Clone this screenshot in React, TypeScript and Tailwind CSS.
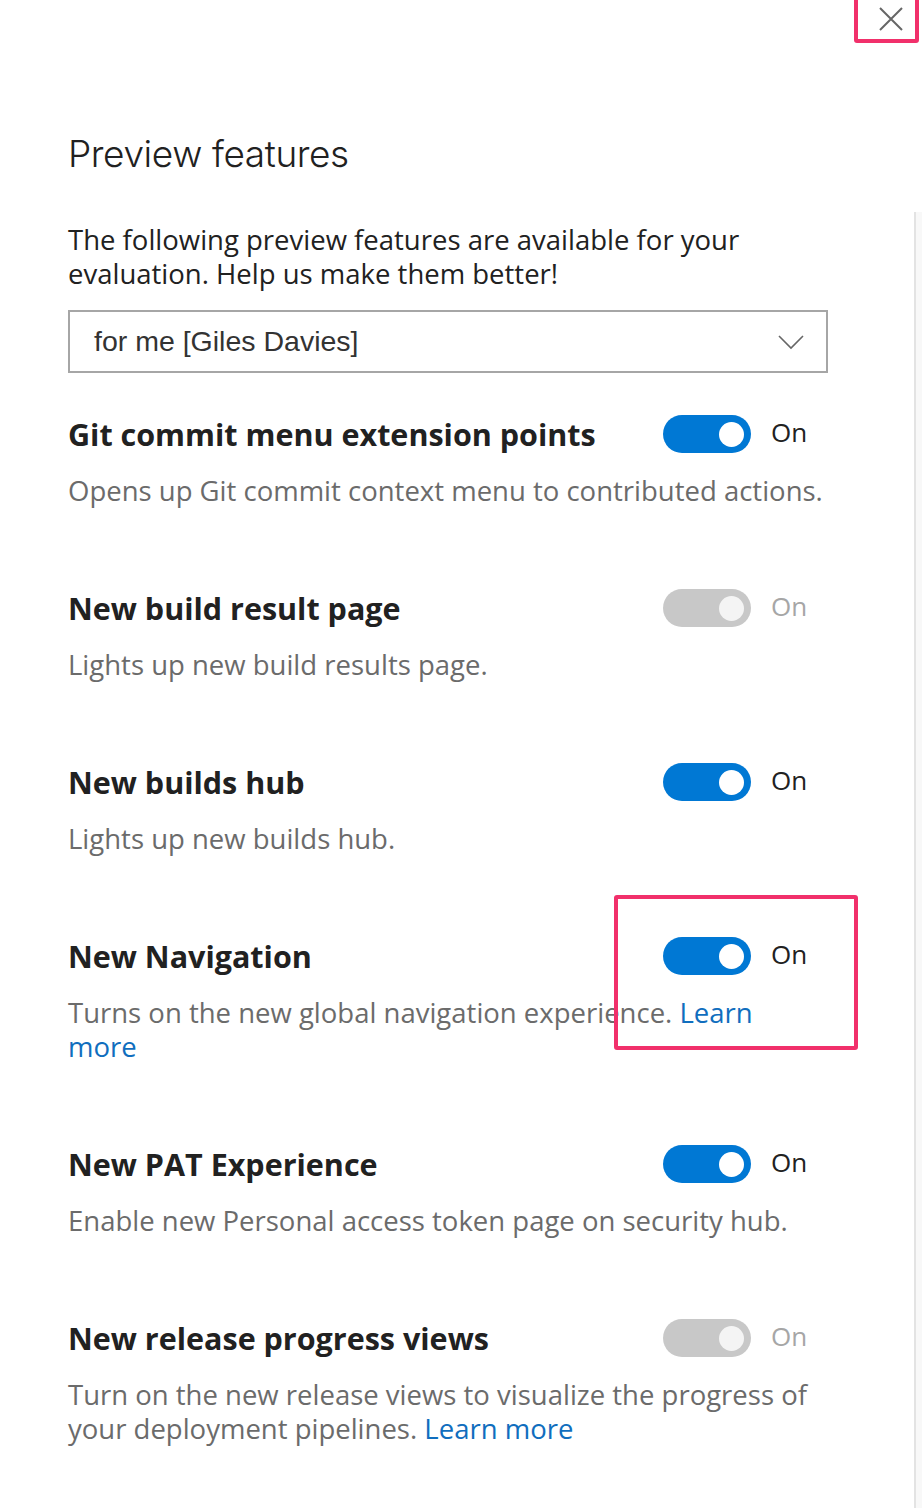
import React from "react";

type Feature = {
  title: string;
  desc: React.ReactNode;
  on: boolean;
};

const Link = ({ children }: { children: React.ReactNode }) => (
  <span className="text-[#106ebe]">{children}</span>
);

const features: Feature[] = [
  {
    title: "Git commit menu extension points",
    desc: "Opens up Git commit context menu to contributed actions.",
    on: true,
  },
  { title: "New build result page", desc: "Lights up new build results page.", on: false },
  { title: "New builds hub", desc: "Lights up new builds hub.", on: true },
  {
    title: "New Navigation",
    desc: (
      <>
        Turns on the new global navigation experience. <Link>Learn more</Link>
      </>
    ),
    on: true,
  },
  {
    title: "New PAT Experience",
    desc: "Enable new Personal access token page on security hub.",
    on: true,
  },
  {
    title: "New release progress views",
    desc: (
      <>
        Turn on the new release views to visualize the progress of your deployment pipelines.{" "}
        <Link>Learn more</Link>
      </>
    ),
    on: false,
  },
];

function Toggle({ on }: { on: boolean }) {
  return (
    <div className="flex items-center">
      <div
        className={
          on
            ? "flex h-[38px] w-[88px] items-center justify-end rounded-full bg-[#0078d4] pr-[7px]"
            : "flex h-[38px] w-[88px] items-center justify-end rounded-full bg-[#c8c8c8] pr-[7px]"
        }
      >
        <div
          className={
            on
              ? "h-[25px] w-[25px] rounded-full bg-white"
              : "h-[25px] w-[25px] rounded-full bg-[#f4f4f4]"
          }
        />
      </div>
      <span
        className={
          on
            ? "mb-[5px] ml-[20px] text-[26px] leading-[34px] text-[#212121]"
            : "mb-[5px] ml-[20px] text-[26px] leading-[34px] text-[#a6a6a6]"
        }
      >
        On
      </span>
    </div>
  );
}

export default function App() {
  return (
    <div
      className="relative min-h-[1508px] w-[922px] overflow-hidden bg-white"
      style={{ fontFamily: '"Open Sans", "Liberation Sans", sans-serif' }}
    >
      {/* scrollbar track */}
      <div className="absolute right-0 top-[212px] bottom-0 w-[8px] border-l-2 border-[#e3e3e3] bg-[#f8f8f8]" />

      {/* close button */}
      <div className="absolute right-[18px] top-[6px] flex h-[26px] w-[26px] items-center justify-center">
        <svg width="26" height="26" viewBox="0 0 26 26">
          <path d="M2 2 L24 24 M24 2 L2 24" stroke="#666" strokeWidth="2" fill="none" />
        </svg>
      </div>
      {/* annotation boxes */}
      <div className="absolute left-[854px] top-[-4px] h-[47px] w-[65px] rounded-[3px] border-4 border-[#f1306b]" />
      <div className="absolute left-[614px] top-[895px] h-[155px] w-[244px] rounded-[3px] border-4 border-[#f1306b]" />

      <div className="w-[830px] pl-[68px] pt-[128px]">
        <h1
          className="text-[37px] font-light leading-[52px] text-[#212121]"
          style={{ fontFamily: "Inter, sans-serif", letterSpacing: "-0.4px" }}
        >
          Preview features
        </h1>
        <p className="mt-[43px] text-[27.5px] leading-[34px] text-[#212121]">
          The following preview features are available for your evaluation. Help us make them
          better!
        </p>
        <div className="mt-[19px] mr-[2px] flex h-[63px] items-center justify-between border-2 border-[#a6a6a6] pl-[24px] pr-[22px]">
          <span
            className="text-[28.5px] text-[#333]"
            style={{ fontFamily: '"Liberation Sans", Arial, sans-serif' }}
          >
            for me [Giles Davies]
          </span>
          <svg width="26" height="16" viewBox="0 0 26 16">
            <path d="M1 2 L13 14 L25 2" stroke="#666" strokeWidth="1.6" fill="none" />
          </svg>
        </div>

        <div className="mt-[41px] flex flex-col gap-[80px]">
          {features.map((f) => (
            <div key={f.title}>
              <div className="flex h-[40px] items-center">
                <div className="flex-1 text-[30.5px] font-bold leading-[40px] text-[#212121]">
                  {f.title}
                </div>
                <div className="w-[167px]">
                  <Toggle on={f.on} />
                </div>
              </div>
              <p className="mt-[20px] w-[757px] text-[27.5px] leading-[34px] text-[#6b6b6b]">
                {f.desc}
              </p>
            </div>
          ))}
        </div>
      </div>
    </div>
  );
}
